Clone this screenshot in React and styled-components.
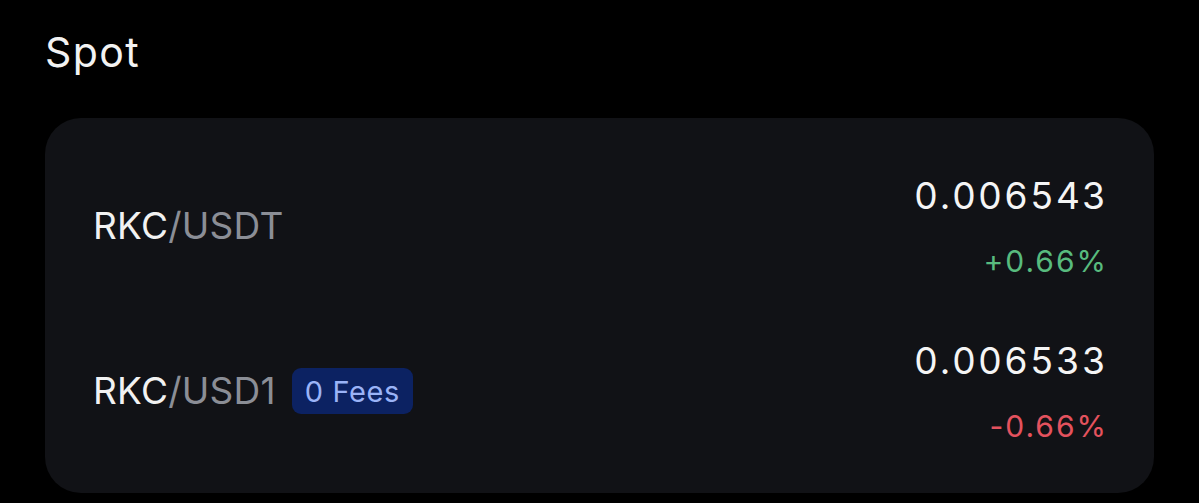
import React from "react";
import styled, { createGlobalStyle } from "styled-components";

const GlobalStyle = createGlobalStyle`
  html, body {
    margin: 0;
    padding: 0;
    background: #000;
  }
  body {
    font-family: Inter, "Noto Sans", "Liberation Sans", sans-serif;
    -webkit-font-smoothing: antialiased;
  }
`;

const Page = styled.div`
  display: flex;
  flex-direction: column;
  gap: 42px;
  padding: 28px 45px 0 45px;
  min-height: 503px;
  box-sizing: border-box;
  background: #000;
`;

const Title = styled.h2`
  margin: 0;
  font-size: 41px;
  line-height: 48px;
  font-weight: 400;
  color: #f2f2f2;
  letter-spacing: 1.4px;
`;

const Card = styled.div`
  display: flex;
  flex-direction: column;
  gap: 61px;
  padding: 56px 48px 50px 48px;
  background: #111216;
  border-radius: 36px;
`;

const Row = styled.div`
  display: flex;
  align-items: center;
  justify-content: space-between;
`;

const Pair = styled.div`
  display: flex;
  align-items: center;
  gap: 16px;
`;

const Symbol = styled.span`
  font-size: 37px;
  line-height: 44px;
  color: #f2f2f2;
  letter-spacing: 0.25px;
`;

const Quote = styled.span`
  color: #8b8e96;
`;

const Badge = styled.span`
  display: inline-flex;
  align-items: center;
  height: 46px;
  padding: 0 13px;
  border-radius: 9px;
  background: #0c2262;
  color: #9ab3f7;
  font-size: 29px;
  letter-spacing: 0.6px;
`;

const Quote_ = styled.div`
  display: flex;
  flex-direction: column;
  align-items: flex-end;
  gap: 26px;
`;

const Price = styled.span`
  font-size: 37px;
  line-height: 44px;
  color: #f5f5f5;
  letter-spacing: 2px;
  font-variant-numeric: tabular-nums;
  margin-right: -2px;
`;

const Change = styled.span`
  font-size: 30px;
  line-height: 34px;
  letter-spacing: 2px;
  margin-right: -2px;
  color: ${p => (p.$up ? "#58bb7e" : "#e4525e")};
`;

const markets = [
  { base: "RKC", quote: "USDT", price: "0.006543", change: "+0.66%", up: true },
  { base: "RKC", quote: "USD1", price: "0.006533", change: "-0.66%", up: false, zeroFee: true },
];

export default function App() {
  return (
    <>
      <GlobalStyle />
      <Page>
        <Title>Spot</Title>
        <Card>
          { markets.map((m) => (
            <Row key={ m.base + m.quote }>
              <Pair>
                <Symbol>{ m.base }<Quote>/{ m.quote }</Quote></Symbol>
                { m.zeroFee && <Badge>0 Fees</Badge> }
              </Pair>
              <Quote_>
                <Price>{ m.price }</Price>
                <Change $up={ m.up }>{ m.change }</Change>
              </Quote_>
            </Row>
          )) }
        </Card>
      </Page>
    </>
  );
}
